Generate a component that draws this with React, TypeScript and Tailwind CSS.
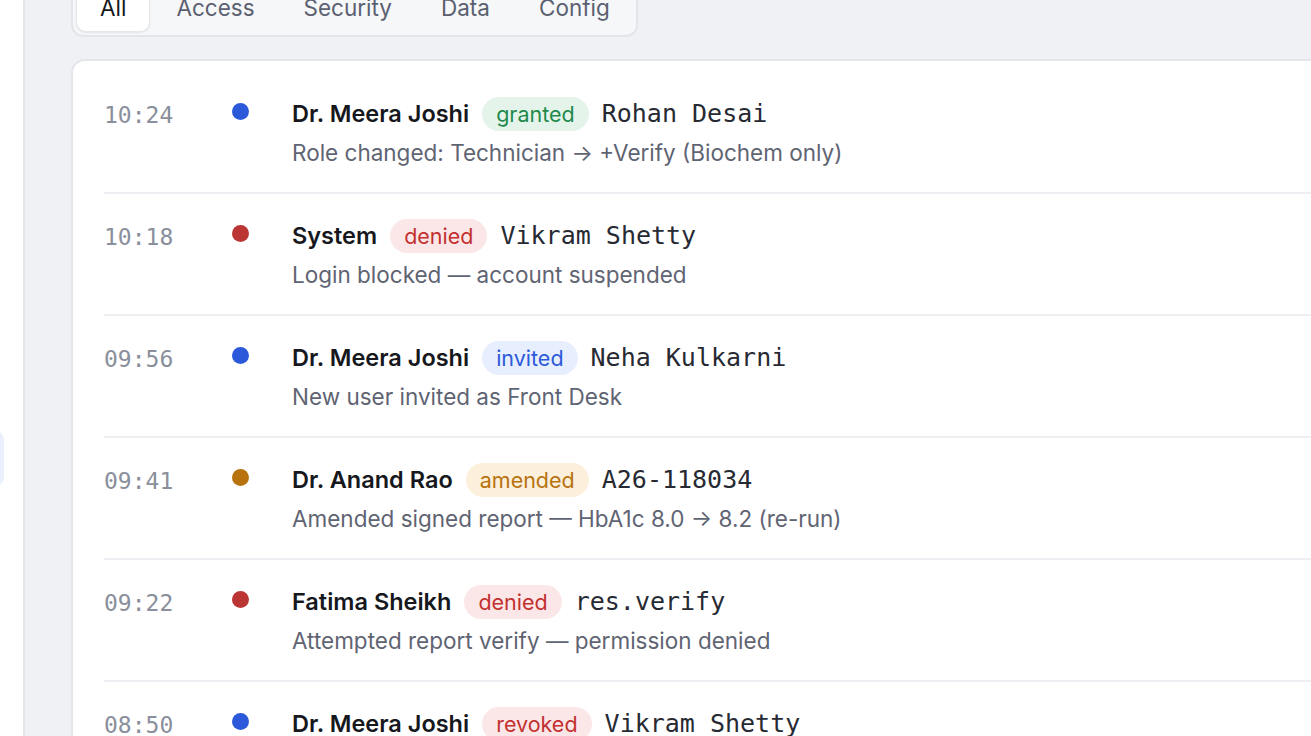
import React from "react";

type Row = {
  time: string;
  dot: string;
  actor: string;
  badge: string;
  badgeCls: string;
  target: string;
  detail: string;
};

const GREEN = "bg-[#e5f4eb] text-[#1f8a4c]";
const RED = "bg-[#fbe7e7] text-[#c2312f]";
const BLUE = "bg-[#e7eefd] text-[#2c5ad8]";
const AMBER = "bg-[#fcf0dc] text-[#b8730f]";

const rows: Row[] = [
  { time: "10:24", dot: "bg-[#2b59d9]", actor: "Dr. Meera Joshi", badge: "granted", badgeCls: GREEN, target: "Rohan Desai", detail: "Role changed: Technician → +Verify (Biochem only)" },
  { time: "10:18", dot: "bg-[#bb3535]", actor: "System", badge: "denied", badgeCls: RED, target: "Vikram Shetty", detail: "Login blocked — account suspended" },
  { time: "09:56", dot: "bg-[#2b59d9]", actor: "Dr. Meera Joshi", badge: "invited", badgeCls: BLUE, target: "Neha Kulkarni", detail: "New user invited as Front Desk" },
  { time: "09:41", dot: "bg-[#b8720e]", actor: "Dr. Anand Rao", badge: "amended", badgeCls: AMBER, target: "A26-118034", detail: "Amended signed report — HbA1c 8.0 → 8.2 (re-run)" },
  { time: "09:22", dot: "bg-[#bb3535]", actor: "Fatima Sheikh", badge: "denied", badgeCls: RED, target: "res.verify", detail: "Attempted report verify — permission denied" },
  { time: "08:50", dot: "bg-[#2b59d9]", actor: "Dr. Meera Joshi", badge: "revoked", badgeCls: RED, target: "Vikram Shetty", detail: "Removed Verify permission" },
];

const tabs = ["All", "Access", "Security", "Data", "Config"];

export default function App() {
  return (
    <div
      className="flex h-[736px] w-[1311px] overflow-hidden bg-[#f0f1f5]"
      style={{ fontFamily: "Inter, 'Noto Sans', sans-serif" }}
    >
      <aside className="relative w-[25px] shrink-0 overflow-hidden border-r-2 border-[#e4e5eb] bg-white">
        <div className="mt-[430px] ml-[-200px] h-[57px] w-[204px] rounded-[10px] bg-[#ebf0fe]" />
      </aside>
      <main className="flex flex-1 flex-col items-start overflow-hidden pl-[46px]">
        <div className="mt-[-21px] flex gap-[3px] rounded-[12px] border-2 border-[#e3e5ea] bg-[#f6f7f9] p-[3px]">
          {tabs.map((t, i) => (
            <div
              key={t}
              className={
                "flex h-[48px] items-center px-[23px] text-[22.5px] " +
                (i === 0
                  ? "rounded-[10px] bg-white text-[#16181d] shadow-[0_1px_2px_rgba(0,0,0,0.08)] border border-[#e6e7eb]"
                  : "text-[#5b6070]")
              }
            >
              {t}
            </div>
          ))}
        </div>
        <div className="mt-[22px] w-[1400px] shrink-0 rounded-[14px] border-2 border-[#e5e6eb] bg-white px-[31px] pt-[11px]">
          {rows.map((r, i) => (
            <div key={i} className="flex border-b-2 border-[#eeeef3] pt-[25px] pb-[24px]">
              <div
                className="w-[128px] shrink-0 pt-[4px] text-[23px] leading-[28px] text-[#8a8f9c]"
                style={{ fontFamily: "'DejaVu Sans Mono', monospace" }}
              >
                {r.time}
              </div>
              <div className={"mt-[6px] h-[17px] w-[17px] shrink-0 rounded-full " + r.dot} />
              <div className="ml-[43px] flex flex-col">
                <div className="flex h-[34px] items-center gap-[13px]">
                  <span className="text-[23.5px] font-semibold text-[#16181d]">{r.actor}</span>
                  <span className={"flex h-[34px] items-center rounded-full px-[14px] text-[21.5px] " + r.badgeCls}>
                    {r.badge}
                  </span>
                  <span
                    className="text-[25px] text-[#272a33]"
                    style={{ fontFamily: "'DejaVu Sans Mono', monospace" }}
                  >
                    {r.target}
                  </span>
                </div>
                <div className="mt-[7px] text-[22.5px] leading-[30px] text-[#5f6473]">{r.detail}</div>
              </div>
            </div>
          ))}
        </div>
      </main>
    </div>
  );
}
